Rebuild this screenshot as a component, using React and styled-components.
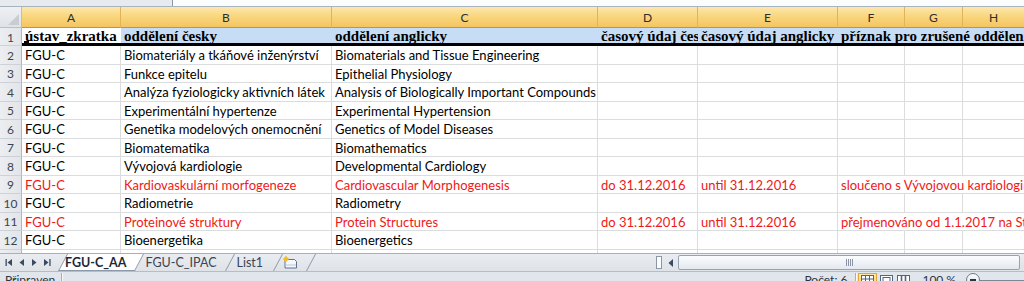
import React from 'react';
import styled, { createGlobalStyle } from 'styled-components';

const COL_TEMPLATE = '22px 99px 211px 266px 100px 140px 67px 58px 62px';
const LETTERS = ['A', 'B', 'C', 'D', 'E', 'F', 'G', 'H'];

const rows = [
  { n: 2, a: 'FGU-C', b: 'Biomateriály a tkáňové inženýrství', c: 'Biomaterials and Tissue Engineering' },
  { n: 3, a: 'FGU-C', b: 'Funkce epitelu', c: 'Epithelial Physiology' },
  { n: 4, a: 'FGU-C', b: 'Analýza fyziologicky aktivních látek', c: 'Analysis of Biologically Important Compounds' },
  { n: 5, a: 'FGU-C', b: 'Experimentální hypertenze', c: 'Experimental Hypertension' },
  { n: 6, a: 'FGU-C', b: 'Genetika modelových onemocnění', c: 'Genetics of Model Diseases' },
  { n: 7, a: 'FGU-C', b: 'Biomatematika', c: 'Biomathematics' },
  { n: 8, a: 'FGU-C', b: 'Vývojová kardiologie', c: 'Developmental Cardiology' },
  {
    n: 9, red: true, a: 'FGU-C', b: 'Kardiovaskulární morfogeneze', c: 'Cardiovascular Morphogenesis',
    d: 'do 31.12.2016', e: 'until 31.12.2016', f: 'sloučeno s Vývojovou kardiologií',
  },
  { n: 10, a: 'FGU-C', b: 'Radiometrie', c: 'Radiometry' },
  {
    n: 11, red: true, a: 'FGU-C', b: 'Proteinové struktury', c: 'Protein Structures',
    d: 'do 31.12.2016', e: 'until 31.12.2016', f: 'přejmenováno od 1.1.2017 na Strukturní biologii',
  },
  { n: 12, a: 'FGU-C', b: 'Bioenergetika', c: 'Bioenergetics' },
  { n: 13, a: 'FGU-C', b: 'Membránový transport', c: 'Membrane Transport' },
];

const GlobalStyle = createGlobalStyle`
  *, *::before, *::after { box-sizing: border-box; }
  html, body { margin: 0; padding: 0; background: #fff; overflow: hidden; }
  body { font-family: Lato, "Open Sans", sans-serif; }
`;

const Window = styled.div`
  width: 1024px;
  height: 281px;
  overflow: hidden;
  display: flex;
  flex-direction: column;
  background: #fff;
`;

const FormulaStrip = styled.div`
  height: 7px;
  flex-shrink: 0;
  display: flex;
  border-bottom: 1px solid #a9b3bf;
  background: #e7eaee;
`;
const NameBox = styled.div`
  width: 173px;
  border-right: 1px solid #8d98a6;
`;
const FormulaInput = styled.div`
  flex: 1;
  background: #fbfcfd;
`;

const Sheet = styled.div`
  height: 246px;
  flex-shrink: 0;
  overflow: hidden;
`;

const GridRow = styled.div`
  display: grid;
  grid-template-columns: ${COL_TEMPLATE};
  height: ${p => p.$h}px;
  overflow: hidden;
`;

const Corner = styled.div`
  background: linear-gradient(#eef0f3, #dfe3e8);
  border-right: 1px solid #b8bfc9;
  border-bottom: 1px solid #b8bfc9;
  display: flex;
  align-items: flex-end;
  justify-content: flex-end;
  padding: 0 2px 2px 0;
`;
const CornerMark = styled.div`
  width: 0;
  height: 0;
  border-left: 11px solid transparent;
  border-bottom: 11px solid #c8cdd4;
`;

const ColHead = styled.div`
  display: flex;
  align-items: center;
  justify-content: center;
  font-size: 12px;
  color: #2e2e2e;
  background: linear-gradient(#fce7ac, #f9d77f 45%, #f4c560);
  border-right: 1px solid #e1b45a;
  border-bottom: 1px solid #c8923a;
`;

const RowHead = styled.div`
  display: flex;
  align-items: center;
  justify-content: center;
  font-size: 12px;
  color: #3c4450;
  background: linear-gradient(90deg, #eceef1, #e2e5e9);
  border-right: 1px solid #aeb7c2;
  border-bottom: 1px solid #cdd2d8;
  padding-top: 1px;
`;

const TitleCell = styled.div`
  grid-column: span ${p => p.$span || 1};
  position: relative;
  display: flex;
  align-items: center;
  padding: 1px 3px 0;
  background: ${p => (p.$fill ? '#c6ddf5' : '#fff')};
  border-bottom: 3px solid #000;
  font-family: "Liberation Serif", "DejaVu Serif", serif;
  font-weight: bold;
  font-size: 15px;
  color: #000;
  white-space: nowrap;
  overflow: hidden;
  min-width: 0;
`;
const SelectHandle = styled.span`
  position: absolute;
  left: 2px;
  bottom: -3px;
  width: 5px;
  height: 5px;
  background: #000;
`;

const Cell = styled.div`
  grid-column: span ${p => p.$span || 1};
  display: flex;
  align-items: center;
  padding: 1px 3px 0;
  border-right: 1px solid #dadcdd;
  border-bottom: 1px solid #dadcdd;
  color: ${p => (p.$red ? '#f01818' : '#000')};
  font-size: 13px;
  white-space: nowrap;
  overflow: hidden;
  min-width: 0;
`;

const TabBar = styled.div`
  height: 18px;
  flex-shrink: 0;
  display: flex;
  background: linear-gradient(#e9ecf0, #dfe3e8);
  border-top: 1px solid #a6b0bc;
`;
const TabsArea = styled.div`
  flex: 0 0 655px;
  display: flex;
  align-items: stretch;
  overflow: hidden;
`;
const Nav = styled.div`
  width: 56px;
  display: flex;
  align-items: center;
  justify-content: space-around;
  padding: 0 2px;
`;
const Tab = styled.div`
  position: relative;
  z-index: ${p => (p.$active ? 2 : 1)};
  display: flex;
  align-items: center;
  padding: 0 ${p => p.$pad || 9}px;
  font-size: 12.5px;
  font-weight: ${p => (p.$active ? 'bold' : 'normal')};
  color: ${p => (p.$active ? '#1f2733' : '#3b4452')};
  margin-top: -1px;

  &::before {
    content: '';
    position: absolute;
    top: 0;
    bottom: 0;
    left: 2px;
    right: 0;
    z-index: -1;
    transform: skewX(-28deg);
    transform-origin: bottom left;
    background: ${p => (p.$active ? '#fff' : 'transparent')};
    border-right: 1px solid #8d99a8;
    border-left: ${p => (p.$active ? '1px solid #8d99a8' : 'none')};
    border-bottom: ${p => (p.$active ? '1px solid #8d99a8' : 'none')};
  }
`;

const ScrollArea = styled.div`
  flex: 1;
  display: flex;
  align-items: center;
  padding-left: 1px;
`;
const SplitBox = styled.div`
  width: 6px;
  height: 13px;
  border: 1px solid #8a97a7;
  background: #fdfdfe;
  margin-right: 3px;
`;
const ArrowBox = styled.div`
  width: 11px;
  height: 15px;
  display: flex;
  align-items: center;
  justify-content: center;
`;
const Thumb = styled.div`
  margin-left: 2px;
  width: 342px;
  height: 15px;
  border: 1px solid #97a3b2;
  border-radius: 2px;
  background: linear-gradient(#fbfcfd, #e4e9ef);
  display: flex;
  align-items: center;
  justify-content: center;
  gap: 1px;
`;
const GripLine = styled.span`
  width: 1px;
  height: 7px;
  background: #8995a4;
`;

const StatusBar = styled.div`
  height: 24px;
  flex-shrink: 0;
  display: flex;
  align-items: flex-start;
  background: #e1e6ec;
  border-top: 1px solid #b4bdc8;
  font-size: 12px;
  color: #2c333d;
`;
const StatusText = styled.span`
  padding: 1px ${p => p.$pad || 0}px 0 ${p => p.$left || 0}px;
  line-height: 14px;
  white-space: nowrap;
`;
const Divider = styled.span`
  width: 1px;
  height: 20px;
  margin: 1px ${p => p.$gap || 4}px 0;
  background: #a6b0bc;
  box-shadow: 1px 0 0 #f6f8fa;
`;
const RightGroup = styled.div`
  margin-left: auto;
  display: flex;
  align-items: flex-start;
`;
const ViewButton = styled.div`
  width: ${p => p.$w || 15}px;
  height: 14px;
  margin: 1px 2px 0 0;
  display: flex;
  justify-content: center;
  padding-top: 1px;
  border: 1px solid ${p => (p.$on ? '#e3a537' : 'transparent')};
  background: ${p => (p.$on ? 'linear-gradient(#fde9a8, #f8cf6a)' : 'transparent')};
`;
const ZoomMinus = styled.div`
  width: 14px;
  height: 14px;
  margin: 1px 0 0 10px;
  border-radius: 50%;
  border: 1px solid #6c7888;
  background: linear-gradient(#fafbfc, #dfe4ea);
  display: flex;
  align-items: center;
  justify-content: center;
`;
const MinusBar = styled.span`
  width: 6px;
  height: 2px;
  background: #2b3441;
`;
const SliderLine = styled.div`
  width: 44px;
  height: 1px;
  margin-top: 8px;
  background: #7c8796;
`;

const NavIcon = ({ dir, bar }) => (
  <svg width="9" height="9" viewBox="0 0 9 9">
    {dir === 'left' ? (
      <polygon points={bar ? '8,1 8,8 3.5,4.5' : '7,1 7,8 2.5,4.5'} fill="#3a4a60" />
    ) : (
      <polygon points={bar ? '1,1 1,8 5.5,4.5' : '2,1 2,8 6.5,4.5'} fill="#3a4a60" />
    )}
    {bar && dir === 'left' && <rect x="1.5" y="1" width="1.3" height="7" fill="#3a4a60" />}
    {bar && dir === 'right' && <rect x="6.3" y="1" width="1.3" height="7" fill="#3a4a60" />}
  </svg>
);

const NewSheetIcon = () => (
  <svg width="16" height="13" viewBox="0 0 16 13">
    <path d="M3 3.5 H12.5 L14.5 5.5 V12 H3 Z" fill="#f4f7fb" stroke="#5d7391" strokeWidth="1" />
    <path d="M3.5 9 H14" stroke="#b8c6d8" strokeWidth="1" />
    <circle cx="4" cy="3" r="2.2" fill="#f5c730" />
    <path d="M4 0 V6 M1 3 H7" stroke="#f2b51a" strokeWidth="1" />
  </svg>
);

const ViewIcon = ({ kind }) => (
  <svg width="13" height="11" viewBox="0 0 13 11">
    <rect x="0.5" y="0.5" width="12" height="10" fill="#fff" stroke="#4f6684" />
    {kind === 'normal' && (
      <path d="M0.5 4 H12.5 M0.5 7.5 H12.5 M4.5 0.5 V10.5 M8.5 0.5 V10.5" stroke="#4f6684" />
    )}
    {kind === 'layout' && <rect x="3" y="2.5" width="7" height="6" fill="none" stroke="#4f6684" />}
    {kind === 'break' && <path d="M4.5 0.5 V10.5 M8.5 0.5 V10.5" stroke="#4f6684" strokeWidth="1.6" />}
  </svg>
);

const ColumnHeaders = () => (
  <GridRow $h={21}>
    <Corner><CornerMark /></Corner>
    {LETTERS.map(l => (
      <ColHead key={l}>{l}</ColHead>
    ))}
  </GridRow>
);

const TitleRow = () => (
  <GridRow $h={18}>
    <RowHead>1</RowHead>
    <TitleCell>
      ústav_zkratka
      <SelectHandle />
    </TitleCell>
    <TitleCell $fill>oddělení česky</TitleCell>
    <TitleCell $fill>oddělení anglicky</TitleCell>
    <TitleCell $fill>časový údaj česky</TitleCell>
    <TitleCell $fill>časový údaj anglicky</TitleCell>
    <TitleCell $fill $span={3}>příznak pro zrušené oddělení</TitleCell>
  </GridRow>
);

const DataRow = ({ row }) => (
  <GridRow $h={18.5}>
    <RowHead>{row.n}</RowHead>
    <Cell $red={row.red}>{row.a}</Cell>
    <Cell $red={row.red}>{row.b}</Cell>
    <Cell $red={row.red}>{row.c}</Cell>
    <Cell $red={row.red}>{row.d}</Cell>
    <Cell $red={row.red}>{row.e}</Cell>
    {row.f ? (
      <Cell $red={row.red} $span={3}>{row.f}</Cell>
    ) : (
      <>
        <Cell />
        <Cell />
        <Cell />
      </>
    )}
  </GridRow>
);

export default function App() {
  return (
    <Window>
      <GlobalStyle />
      <FormulaStrip>
        <NameBox />
        <FormulaInput />
      </FormulaStrip>

      <Sheet>
        <ColumnHeaders />
        <TitleRow />
        {rows.map(r => (
          <DataRow key={r.n} row={r} />
        ))}
      </Sheet>

      <TabBar>
        <TabsArea>
          <Nav>
            <NavIcon dir="left" bar />
            <NavIcon dir="left" />
            <NavIcon dir="right" />
            <NavIcon dir="right" bar />
          </Nav>
          <Tab $active $pad={9}>FGU-C_AA</Tab>
          <Tab $pad={10}>FGU-C_IPAC</Tab>
          <Tab $pad={10}>List1</Tab>
          <Tab $pad={9}><NewSheetIcon /></Tab>
        </TabsArea>
        <ScrollArea>
          <SplitBox />
          <ArrowBox>
            <svg width="6" height="8" viewBox="0 0 6 8">
              <polygon points="5,0 5,8 0.5,4" fill="#3a4a60" />
            </svg>
          </ArrowBox>
          <Thumb>
            <GripLine />
            <GripLine />
            <GripLine />
            <GripLine />
          </Thumb>
        </ScrollArea>
      </TabBar>

      <StatusBar>
        <StatusText $left={5} $pad={3}>Připraven</StatusText>
        <Divider $gap={3} />
        <RightGroup>
          <StatusText $pad={6}>Počet: 6</StatusText>
          <Divider $gap={2} />
          <ViewButton $on $w={19}><ViewIcon kind="normal" /></ViewButton>
          <ViewButton><ViewIcon kind="layout" /></ViewButton>
          <ViewButton><ViewIcon kind="break" /></ViewButton>
          <StatusText $left={9}>100 %</StatusText>
          <ZoomMinus><MinusBar /></ZoomMinus>
          <SliderLine />
        </RightGroup>
      </StatusBar>
    </Window>
  );
}
